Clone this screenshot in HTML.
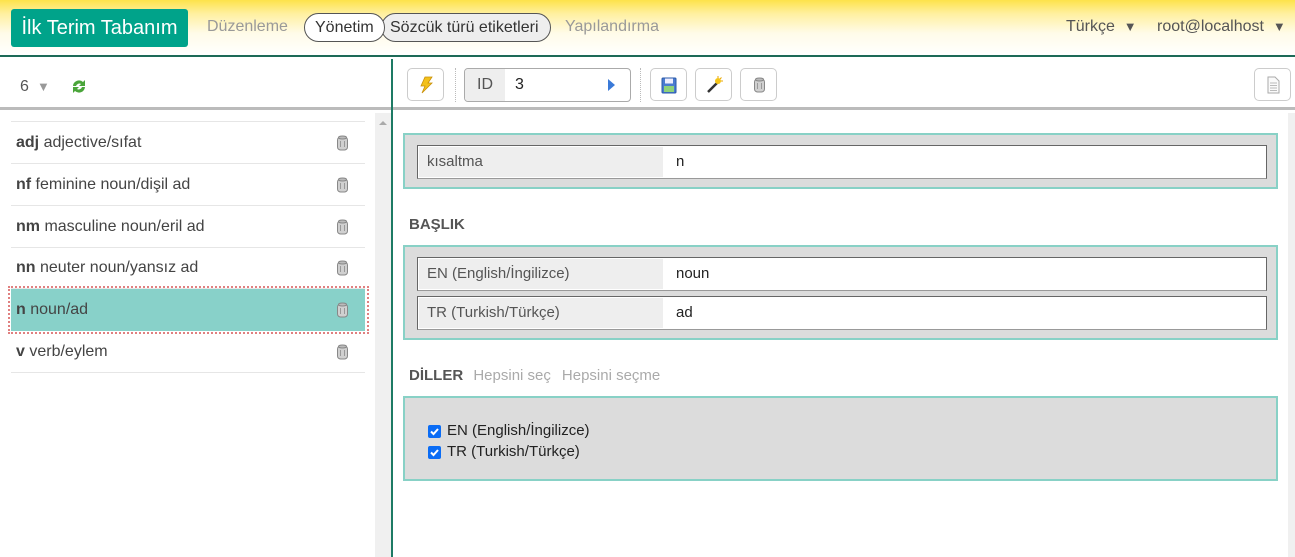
<!DOCTYPE html>
<html><head><meta charset="utf-8"><style>
*{box-sizing:border-box;margin:0;padding:0}
body{width:1295px;height:557px;overflow:hidden;font-family:"Liberation Sans",sans-serif;background:#fff;position:relative;color:#333}
.hdr{position:absolute;left:0;top:0;width:1295px;height:57px;background:linear-gradient(to bottom,#fde24a 0%,#fff0a0 25%,#fffbe8 60%,#fff 100%);border-bottom:2px solid #1d6a57}
.logo{position:absolute;left:11px;top:9px;width:177px;height:38px;background:#00a38a;color:#fff;border-radius:3px;font-size:20px;line-height:38px;text-align:center}
.nav{position:absolute;top:18px;font-size:16px;color:#999}
.pill{position:absolute;top:13px;height:29px;border:1px solid #555;border-radius:15px;font-size:16px;line-height:27px;color:#333;padding:0 10px}
.abs{position:absolute}
.btn{position:absolute;top:68px;width:37px;height:33px;border:1px solid #ccc;border-radius:5px;background:#fff}
.btn svg{position:absolute;left:9px;top:7px}
.row{position:absolute;left:11px;width:354px;height:42px;border-bottom:1px solid #e6e6e6;font-size:16px;color:#444;line-height:42px;padding-left:5px}
.row b{color:#444}
.can{position:absolute;right:16px;top:13px}
.box{position:absolute;left:403px;width:875px;background:#dcdcdc;border:2px solid #88d1c6}
.fld{position:absolute;left:12px;width:850px;height:34px;background:#fff;border:1px solid #666;border-bottom-color:#999}
.fld .l{position:absolute;left:1px;top:1px;width:244px;height:30px;background:#eee;font-size:15px;color:#555;line-height:30px;padding-left:8px}
.fld .v{position:absolute;left:258px;top:0;line-height:32px;font-size:15px;color:#222}
.sec{position:absolute;left:409px;font-size:15px;font-weight:bold;color:#555}
.cb{position:absolute;width:13px;height:13px;background:#0a6cf5;border-radius:2px}
.cb svg{position:absolute;left:0;top:0}
</style></head><body>
<div class="hdr">
<div class="logo">İlk Terim Tabanım</div>
<div class="nav" style="left:207px">Düzenleme</div>
<div class="pill" style="left:381px;width:170px;background:#eee;padding-left:8px">Sözcük türü etiketleri</div>
<div class="pill" style="left:304px;background:#fff;z-index:2">Yönetim</div>
<div class="nav" style="left:565px">Yapılandırma</div>
<div class="nav" style="left:1066px;color:#555">Türkçe &nbsp;<span style="font-size:13px">▼</span></div>
<div class="nav" style="left:1157px;color:#555">root@localhost &nbsp;<span style="font-size:13px">▼</span></div>
</div>
<svg width="0" height="0" style="position:absolute"><defs><g id="can"><rect x="1.5" y="2" width="10" height="13" rx="3" fill="#d0d0d0" stroke="#888"/><ellipse cx="6.5" cy="2.5" rx="4" ry="1.5" fill="#bbb" stroke="#888"/><line x1="4.5" y1="6" x2="4.5" y2="12" stroke="#999"/><line x1="8.5" y1="6" x2="8.5" y2="12" stroke="#999"/></g></defs></svg>
<!-- left -->
<div class="abs" style="left:0;top:59px;width:391px;height:51px;background:#fff;border-bottom:3px solid #bbb"></div>
<div class="abs" style="left:20px;top:78px;font-size:16px;color:#555">6 <span style="font-size:13px;color:#999">&nbsp;▼</span></div>
<svg class="abs" style="left:70px;top:78px" width="18" height="17" viewBox="0 0 18 17"><path d="M3 8a6 6 0 0 1 10-4l2-2v6h-6l2-2a3.5 3.5 0 0 0-5 2z" fill="#4aa53a"/><path d="M15 9a6 6 0 0 1-10 4l-2 2V9h6l-2 2a3.5 3.5 0 0 0 5-2z" fill="#4aa53a"/></svg>
<div class="abs" style="left:375px;top:113px;width:16px;height:444px;background:#f0f0f0"></div>
<div class="abs" style="left:379px;top:117px;width:0;height:0;border:4px solid transparent;border-bottom-color:#aaa"></div>
<div class="abs" style="left:391px;top:59px;width:2px;height:498px;background:#1d7a64"></div>
<div class="abs" style="left:11px;top:121px;width:354px;height:1px;background:#e6e6e6"></div>
<div class="row" style="top:122px"><b>adj</b> adjective/sıfat<svg class="can" width="13" height="16"><use href="#can"/></svg></div>
<div class="row" style="top:164px"><b>nf</b> feminine noun/dişil ad<svg class="can" width="13" height="16"><use href="#can"/></svg></div>
<div class="row" style="top:206px"><b>nm</b> masculine noun/eril ad<svg class="can" width="13" height="16"><use href="#can"/></svg></div>
<div class="row" style="top:247px"><b>nn</b> neuter noun/yansız ad<svg class="can" width="13" height="16"><use href="#can"/></svg></div>
<div class="abs" style="left:8px;top:286px;width:361px;height:48px;border:2px dotted #e08080"></div>
<div class="row" style="top:289px;background:#88d1c9;border-bottom:none"><b>n</b> noun/ad<svg class="can" width="13" height="16"><use href="#can"/></svg></div>
<div class="row" style="top:331px"><b>v</b> verb/eylem<svg class="can" width="13" height="16"><use href="#can"/></svg></div>
<!-- right toolbar -->
<div class="abs" style="left:393px;top:59px;width:902px;height:51px;border-bottom:3px solid #bbb"></div>
<div class="btn" style="left:407px"><svg width="18" height="18" viewBox="0 0 18 18"><path d="M8 1h7l-4 6h4L5 17l3-7H4z" fill="#f3c11a" stroke="#c8900a" stroke-width=".8"/></svg></div>
<div class="abs" style="left:455px;top:68px;width:1px;height:34px;border-left:1px dotted #bbb"></div>
<div class="abs" style="left:464px;top:68px;width:167px;height:34px;border:1px solid #aaa;border-radius:4px;background:#fff;overflow:hidden">
<div class="abs" style="left:0;top:0;width:40px;height:32px;background:#eee;font-size:16px;color:#555;line-height:32px;text-align:center">ID</div>
<div class="abs" style="left:50px;top:7px;font-size:16px;color:#222">3</div>
<div class="abs" style="left:143px;top:10px;width:0;height:0;border-top:6px solid transparent;border-bottom:6px solid transparent;border-left:7px solid #3a7ad8"></div></div>
<div class="abs" style="left:640px;top:68px;width:1px;height:34px;border-left:1px dotted #bbb"></div>
<div class="btn" style="left:650px"><svg width="18" height="18" viewBox="0 0 18 18"><rect x="2" y="2" width="14" height="15" rx="1" fill="#4a7bd0" stroke="#2a5aa8"/><rect x="5" y="2.5" width="8" height="5" fill="#eef"/><rect x="4" y="10" width="10" height="6" fill="#8fd27a"/></svg></div>
<div class="btn" style="left:695px"><svg width="18" height="18" viewBox="0 0 18 18"><path d="M3 16L12 7" stroke="#333" stroke-width="2.5"/><circle cx="13" cy="5" r="3" fill="#f5c518"/><path d="M13 0v2M18 5h-2M16.5 1.5l-1.5 1.5" stroke="#e9a600"/></svg></div>
<div class="btn" style="left:740px"><svg width="18" height="18" viewBox="-3 -1 18 18"><use href="#can"/></svg></div>
<div class="btn" style="left:1254px"><svg width="18" height="18" viewBox="0 0 18 18"><path d="M4 1h7l4 4v12H4z" fill="#fafafa" stroke="#aaa"/><path d="M6 7h7M6 9.5h7M6 12h7M6 14.5h7" stroke="#bbb"/></svg></div>
<div class="abs" style="left:1288px;top:113px;width:7px;height:444px;background:#f0f0f0"></div>
<!-- form -->
<div class="box" style="top:133px;height:56px"><div class="fld" style="top:10px"><div class="l">kısaltma</div><div class="v">n</div></div></div>
<div class="sec" style="top:216px">BAŞLIK</div>
<div class="box" style="top:245px;height:95px">
<div class="fld" style="top:10px"><div class="l">EN (English/İngilizce)</div><div class="v">noun</div></div>
<div class="fld" style="top:49px"><div class="l">TR (Turkish/Türkçe)</div><div class="v">ad</div></div></div>
<div class="sec" style="top:367px">DİLLER <span style="font-weight:normal;color:#aaa;margin-left:6px">Hepsini seç</span><span style="font-weight:normal;color:#aaa;margin-left:11px">Hepsini seçme</span></div>
<div class="box" style="top:396px;height:85px">
<div class="cb" style="left:23px;top:27px"><svg width="13" height="13"><path d="M3 6.5l2.5 2.5 4.5-5" stroke="#fff" stroke-width="2" fill="none"/></svg></div><div class="abs" style="left:42px;top:24px;font-size:15px;color:#222">EN (English/İngilizce)</div>
<div class="cb" style="left:23px;top:48px"><svg width="13" height="13"><path d="M3 6.5l2.5 2.5 4.5-5" stroke="#fff" stroke-width="2" fill="none"/></svg></div><div class="abs" style="left:42px;top:45px;font-size:15px;color:#222">TR (Turkish/Türkçe)</div>
</div>
</body></html>
